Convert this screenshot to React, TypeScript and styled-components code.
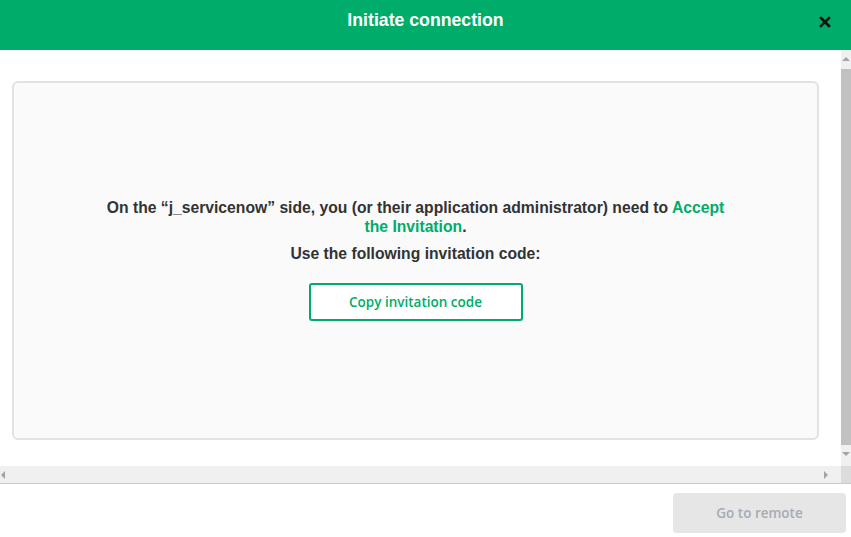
import React from 'react';
import styled, { createGlobalStyle } from 'styled-components';

const GlobalStyle = createGlobalStyle`
  html, body {
    margin: 0;
    padding: 0;
    background: #ffffff;
  }
  body {
    font-family: "Liberation Sans", Arial, sans-serif;
  }
`;

const Page = styled.div`
  width: 851px;
  height: 537px;
  display: flex;
  flex-direction: column;
  overflow: hidden;
`;

const Header = styled.div`
  height: 50px;
  flex: none;
  background-color: #00ac69;
  display: grid;
  grid-template-columns: 1fr auto 1fr;
  align-items: start;
`;

const Title = styled.h1`
  grid-column: 2;
  margin: 0;
  padding-top: 10px;
  color: #ffffff;
  font-size: 17.7px;
  font-weight: bold;
  line-height: 20px;
`;

const CloseButton = styled.button`
  grid-column: 3;
  justify-self: end;
  margin: 16px 20px 0 0;
  padding: 0;
  width: 12px;
  height: 12px;
  border: none;
  background: transparent;
  cursor: pointer;
  display: flex;
`;

const ScrollFrame = styled.div`
  flex: none;
  display: grid;
  grid-template-columns: 1fr 10px;
  grid-template-rows: 416px 17px;
`;

const Viewport = styled.div`
  padding: 31px 22px 0 12px;
  display: flex;
  flex-direction: column;
`;

const Card = styled.div`
  height: 352px;
  border: 2px solid #e2e2e2;
  border-radius: 6px;
  background-color: #fafafa;
  display: flex;
  flex-direction: column;
  align-items: center;
  justify-content: center;
  padding-bottom: 3px;
`;

const Message = styled.p`
  margin: 0;
  max-width: 630px;
  text-align: center;
  color: #333333;
  font-size: 15.7px;
  font-weight: bold;
  line-height: 19px;
`;

const Highlight = styled.span`
  color: #00ac69;
`;

const SubMessage = styled(Message)`
  margin-top: 8px;
`;

const CopyButton = styled.button`
  margin-top: 20px;
  width: 214px;
  height: 38px;
  border: 2px solid #00ac69;
  border-radius: 3px;
  background: #ffffff;
  color: #00ac69;
  font-family: "Open Sans", "Noto Sans", sans-serif;
  font-size: 13.5px;
  font-weight: 600;
  cursor: pointer;
`;

const VBar = styled.div`
  background-color: #f0f0f0;
  display: flex;
  flex-direction: column;
  align-items: stretch;
`;

const HBar = styled.div`
  background-color: #f0f0f0;
  display: flex;
  align-items: center;
  justify-content: space-between;
  padding: 0 12px 0 0;
`;

const ArrowCell = styled.div<{ $size: number }>`
  height: ${p => p.$size}px;
  flex: none;
  display: flex;
  align-items: center;
  justify-content: center;
`;

const Thumb = styled.div`
  margin-top: 2px;
  height: 376px;
  background-color: #c1c1c1;
`;

const Corner = styled.div`
  background-color: #dcdcdc;
`;

const Footer = styled.div`
  flex: 1;
  border-top: 1px solid #c9c9c9;
  display: flex;
  justify-content: flex-end;
  align-items: flex-start;
  padding: 9px 5px 0 0;
`;

const RemoteButton = styled.button`
  width: 173px;
  height: 40px;
  border: none;
  border-radius: 4px;
  background-color: #e6e6e6;
  color: #a6abb5;
  font-family: "Open Sans", "Noto Sans", sans-serif;
  font-size: 13.5px;
  font-weight: 600;
`;

const Triangle = ({ dir }: { dir: 'up' | 'down' | 'left' | 'right' }) => {
  const pts = {
    up: '0,5 4,1 8,5',
    down: '0,1 8,1 4,5',
    left: '5,0 5,8 1,4',
    right: '1,0 1,8 5,4',
  }[dir];
  const vertical = dir === 'up' || dir === 'down';
  return (
    <svg width={vertical ? 8 : 6} height={vertical ? 6 : 8} viewBox={vertical ? '0 0 8 6' : '0 0 6 8'}>
      <polygon points={pts} fill="#a3a3a3" />
    </svg>
  );
};

const App: React.FC = () => {
  return (
    <>
      <GlobalStyle />
      <Page>
        <Header>
          <Title>Initiate connection</Title>
          <CloseButton aria-label="Close">
            <svg width="12" height="12" viewBox="0 0 12 12">
              <path d="M2 2 L10 10 M10 2 L2 10" stroke="#111" strokeWidth="2.6" strokeLinecap="square" />
            </svg>
          </CloseButton>
        </Header>
        <ScrollFrame>
          <Viewport>
            <Card>
              <Message>
                On the “j_servicenow” side, you (or their application administrator) need to{' '}
                <Highlight>Accept the Invitation</Highlight>.
              </Message>
              <SubMessage>Use the following invitation code:</SubMessage>
              <CopyButton>Copy invitation code</CopyButton>
            </Card>
          </Viewport>
          <VBar>
            <ArrowCell $size={17}>
              <Triangle dir="up" />
            </ArrowCell>
            <Thumb />
            <ArrowCell $size={17}>
              <Triangle dir="down" />
            </ArrowCell>
          </VBar>
          <HBar>
            <Triangle dir="left" />
            <Triangle dir="right" />
          </HBar>
          <Corner />
        </ScrollFrame>
        <Footer>
          <RemoteButton disabled>Go to remote</RemoteButton>
        </Footer>
      </Page>
    </>
  );
};

export default App;
